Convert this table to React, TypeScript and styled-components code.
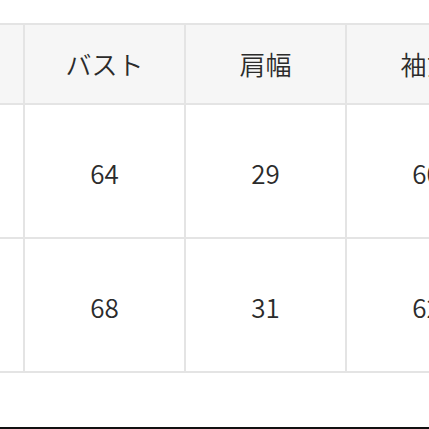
import React from "react";
import styled, { createGlobalStyle } from "styled-components";

const Global = createGlobalStyle`
  html, body {
    margin: 0;
    padding: 0;
    background: #ffffff;
    overflow: hidden;
  }
  body {
    font-family: "Noto Sans CJK JP", "Noto Sans", sans-serif;
  }
`;

const Page = styled.div`
  width: 429px;
  height: 429px;
  display: flex;
  flex-direction: column;
  overflow: hidden;
  background: #ffffff;
`;

const Grid = styled.div`
  margin-top: 23px;
  margin-left: -138px;
  display: grid;
  grid-template-columns: repeat(5, 159px);
  grid-template-rows: 78px 132px 132px;
  gap: 2px;
  padding: 2px;
  background: #e4e4e4;
  width: max-content;
  flex: none;
`;

const Cell = styled.div<{ $head?: boolean }>`
  display: flex;
  align-items: center;
  justify-content: center;
  padding-top: ${(p) => (p.$head ? "0" : "4px")};
  background: ${(p) => (p.$head ? "#f6f6f6" : "#ffffff")};
  color: #2b2b2b;
  font-size: 26px;
  font-weight: 350;
  line-height: 1;
  white-space: nowrap;
`;

const BottomRule = styled.div`
  margin-top: auto;
  height: 2px;
  background: #111111;
  flex: none;
`;

const headers = ["サイズ", "バスト", "肩幅", "袖丈", "着丈"];
const rows = [
  ["M", "64", "29", "60", "70"],
  ["L", "68", "31", "62", "72"],
];

export default function App() {
  return (
    <Page>
      <Global />
      <Grid>
        {headers.map((h) => (
          <Cell key={h} $head>
            {h}
          </Cell>
        ))}
        {rows.map((r, i) =>
          r.map((v, j) => <Cell key={`${i}-${j}`}>{v}</Cell>)
        )}
      </Grid>
      <BottomRule />
    </Page>
  );
}
